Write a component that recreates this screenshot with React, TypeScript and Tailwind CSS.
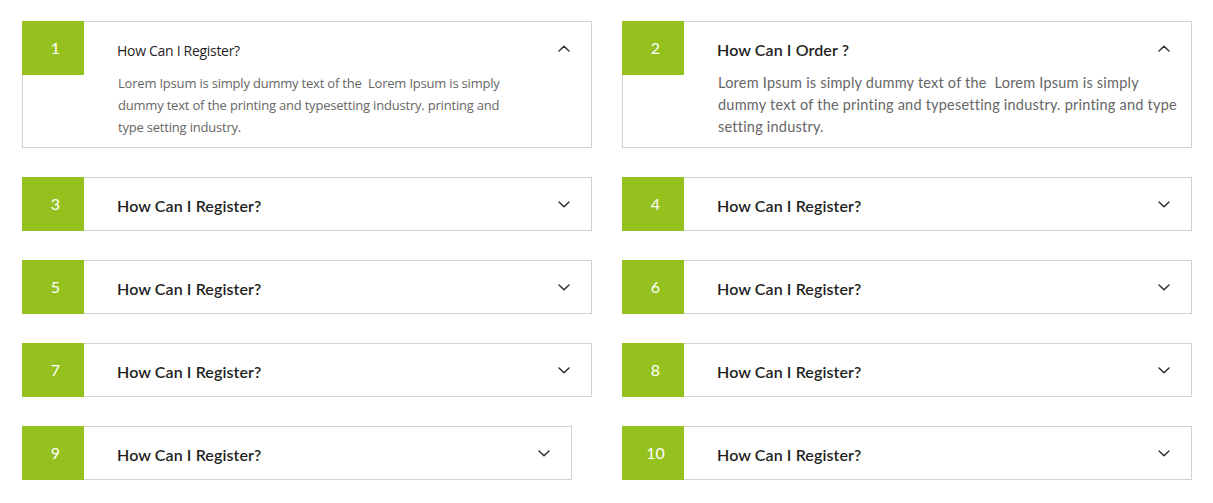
import React from 'react';

type Faq = {
  num: number;
  title: string;
  open?: boolean;
  lines?: string[];
  narrow?: boolean;
  myriad?: boolean;
};

const faqs: Faq[] = [
  {
    num: 1,
    title: 'How Can I Register?',
    open: true,
    myriad: true,
    lines: [
      'Lorem Ipsum is simply dummy text of the\u00a0 Lorem Ipsum is simply',
      'dummy text of the printing and typesetting industry. printing and',
      'type setting industry.',
    ],
  },
  {
    num: 2,
    title: 'How Can I Order ?',
    open: true,
    lines: [
      'Lorem Ipsum is simply dummy text of the\u00a0 Lorem Ipsum is simply',
      'dummy text of the printing and typesetting industry. printing and type',
      'setting industry.',
    ],
  },
  { num: 3, title: 'How Can I Register?' },
  { num: 4, title: 'How Can I Register?' },
  { num: 5, title: 'How Can I Register?' },
  { num: 6, title: 'How Can I Register?' },
  { num: 7, title: 'How Can I Register?' },
  { num: 8, title: 'How Can I Register?' },
  { num: 9, title: 'How Can I Register?', narrow: true },
  { num: 10, title: 'How Can I Register?' },
];

const Chevron = ({ up }: { up?: boolean }) => (
  <svg width="12" height="7" viewBox="0 0 12 7" fill="none" className="-mt-[3px] shrink-0">
    <path
      d={up ? 'M1 6L6 1.2L11 6' : 'M1 1L6 5.8L11 1'}
      stroke="#2a2a2a"
      strokeWidth="1.4"
      strokeLinecap="round"
      strokeLinejoin="round"
    />
  </svg>
);

const FaqCard = ({ item }: { item: Faq }) => {
  const titleFont = item.myriad
    ? "font-['Open_Sans',sans-serif] text-[14px] font-normal tracking-[-0.3px]"
    : "font-['Lato',sans-serif] text-[16px] font-semibold tracking-[0.1px]";
  const bodyFont = item.myriad
    ? "font-['Open_Sans',sans-serif] text-[13px] tracking-[-0.2px]"
    : "font-['Lato',sans-serif] text-[14.5px] tracking-[0.22px]";

  return (
    <div className={`flex border border-[#d2d2d2] bg-white ${item.narrow ? 'w-[550px]' : 'w-[570px]'}`}>
      <div className="-my-px -ml-px flex h-[54px] w-[62px] shrink-0 items-center justify-center bg-[#95c11f] pl-[5px] font-['Lato',sans-serif] text-[16px] text-white">
        {item.num}
      </div>
      <div className="min-w-0 flex-1 pl-[33px] pr-[21px]">
        <div className="flex h-[52px] items-center justify-between pt-[4px]">
          <span className={`text-[#1f1f1f] ${titleFont}`}>{item.title}</span>
          <Chevron up={item.open} />
        </div>
        {item.open && item.lines && (
          <div className={`-mt-[2px] pb-[9px] pl-px leading-[22px] text-[#666666] ${bodyFont}`}>
            {item.lines.map((l) => (
              <div key={l} className="whitespace-nowrap">
                {l}
              </div>
            ))}
          </div>
        )}
      </div>
    </div>
  );
};

export default function App() {
  return (
    <div className="min-h-screen bg-white px-[22px] pt-[21px]">
      <div className="grid w-[1170px] grid-cols-[570px_570px] items-start gap-x-[30px] gap-y-[29px]">
        {faqs.map((f) => (
          <FaqCard key={f.num} item={f} />
        ))}
      </div>
    </div>
  );
}
